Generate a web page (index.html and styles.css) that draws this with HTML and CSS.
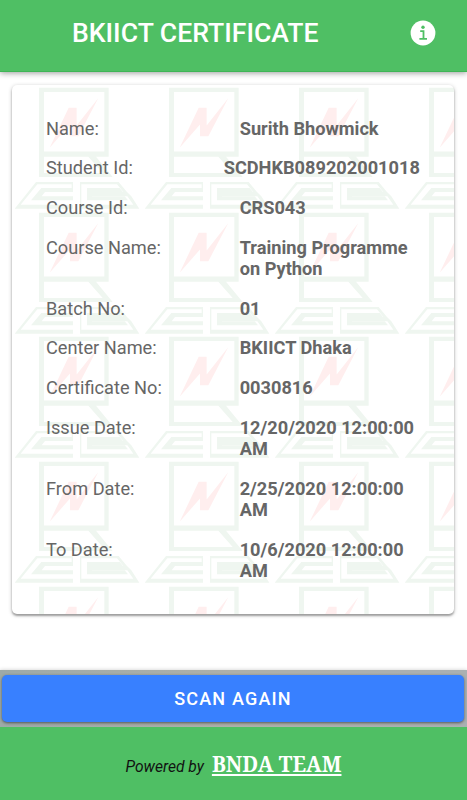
FILE: index.html
```html
<!DOCTYPE html>
<html lang="en">

<head>
    <meta charset="UTF-8">
    <meta name="viewport" content="width=device-width, initial-scale=1.0">
    <title>BKIICT Certificate</title>
    <link rel="stylesheet" href="styles.css">
</head>

<body>
    <header class="header">
        <h1>BKIICT CERTIFICATE</h1>
        <svg class="info-icon" viewBox="0 0 26 26" width="26" height="26">
            <circle cx="13" cy="13" r="12.4" fill="#fff" />
            <circle cx="13" cy="7.3" r="1.7" fill="#4fbf64" />
            <path d="M10.2 11.2h3.3v7.6M9.4 18.9h7.6" fill="none" stroke="#4fbf64" stroke-width="1.8" />
        </svg>
    </header>

    <main class="content">
        <div class="card">
            <div class="row"><span>Name:</span><b>Surith Bhowmick</b></div>
            <div class="row"><span>Student Id:</span><b class="student-id">SCDHKB089202001018</b></div>
            <div class="row"><span>Course Id:</span><b>CRS043</b></div>
            <div class="row"><span>Course Name:</span><b>Training Programme on Python</b></div>
            <div class="row"><span>Batch No:</span><b>01</b></div>
            <div class="row"><span>Center Name:</span><b>BKIICT Dhaka</b></div>
            <div class="row"><span>Certificate No:</span><b>0030816</b></div>
            <div class="row"><span>Issue Date:</span><b>12/20/2020 12:00:00 AM</b></div>
            <div class="row"><span>From Date:</span><b>2/25/2020 12:00:00 AM</b></div>
            <div class="row"><span>To Date:</span><b>10/6/2020 12:00:00 AM</b></div>
        </div>
    </main>

    <div class="scan-bar">
        <button class="scan-button">SCAN AGAIN</button>
    </div>

    <footer class="footer">
        <i>Powered by</i>
        <a href="#">BNDA TEAM</a>
    </footer>
</body>

</html>
```
FILE: styles.css
```css
* {
    box-sizing: border-box;
}

body {
    margin: 0;
    height: 100vh;
    display: flex;
    flex-direction: column;
    font-family: Roboto, "Liberation Sans", sans-serif;
    background-color: #fff;
    overflow: hidden;
}

.header {
    height: 72px;
    flex: none;
    display: flex;
    align-items: center;
    justify-content: space-between;
    padding: 0 31px 6px 72px;
    background-color: #4fbf64;
    border-bottom: 1px solid #3fb556;
    box-shadow: 0 1px 6px rgba(0, 0, 0, 0.4);
}

.header h1 {
    margin: 0;
    font-size: 26.6px;
    font-weight: 500;
    color: #fff;
    white-space: nowrap;
}

.info-icon {
    display: block;
}

.content {
    flex: 1;
    padding: 13px 13px 0 12px;
}

.card {
    height: 529px;
    padding: 23.4px 32px 0 34px;
    border-radius: 5px;
    background-color: #fff;
    background-image: url("data:image/svg+xml,%3Csvg xmlns='http://www.w3.org/2000/svg' viewBox='0 0 390 374' preserveAspectRatio='none'%3E%3Cg fill='%23eff6f0'%3E%3Cpath fill-rule='evenodd' d='M81 8H290V215H252L302 275H81ZM96 21V199H277V21ZM96 215V263H272L229 215Z'/%3E%3Cpath d='M8 370L72 290H183V320H99L89 333H183V345H57L88 308H179V297H76L26 358H183V370Z'/%3E%3Cpath d='M204 290H320L345 320L358 333L382 370H204ZM208 297V358H364L346 333H240V320H334L315 297Z' fill-rule='evenodd'/%3E%3Cpath d='M225 308H323L333 320H240V333H338L348 345H225Z'/%3E%3C/g%3E%3Cpath fill='%23ffeeee' d='M113 188L170 68H194V121L259 39L199 153H174V118Z'/%3E%3C/svg%3E");
    background-size: 130px 124.75px;
    box-shadow: 0 2px 2px rgba(0, 0, 0, 0.28), 0 1px 4px rgba(0, 0, 0, 0.24);
    font-size: 18.2px;
    line-height: 21.4px;
    color: #666;
}

.row {
    display: grid;
    grid-template-columns: 193.7px 1fr;
    padding: 9.15px 0;
}

.row b {
    font-weight: 700;
}

.row .student-id {
    margin-left: -16px;
}

.scan-bar {
    height: 57px;
    flex: none;
    padding: 5px 3px 5px 2px;
    background: linear-gradient(90deg, #9eaaa8, #aeb0a9 50%, #aab0b2);
    box-shadow: 0 0 4px rgba(0, 0, 0, 0.2);
}

.scan-button {
    display: block;
    width: 100%;
    height: 47px;
    padding: 0 0 1px;
    border: none;
    border-radius: 5px;
    background-color: #3880ff;
    box-shadow: 0 1px 3px rgba(0, 0, 0, 0.5);
    color: #fff;
    font-family: inherit;
    font-size: 18px;
    font-weight: 500;
    letter-spacing: 1.2px;
}

.footer {
    height: 73px;
    flex: none;
    display: flex;
    align-items: baseline;
    justify-content: center;
    gap: 8px;
    padding-top: 23px;
    background-color: #4fbf64;
    font-size: 15.6px;
    color: #111;
}

.footer a {
    font-family: "Noto Serif", "Liberation Serif", serif;
    font-size: 20.8px;
    font-weight: 700;
    color: #fff;
}
```
